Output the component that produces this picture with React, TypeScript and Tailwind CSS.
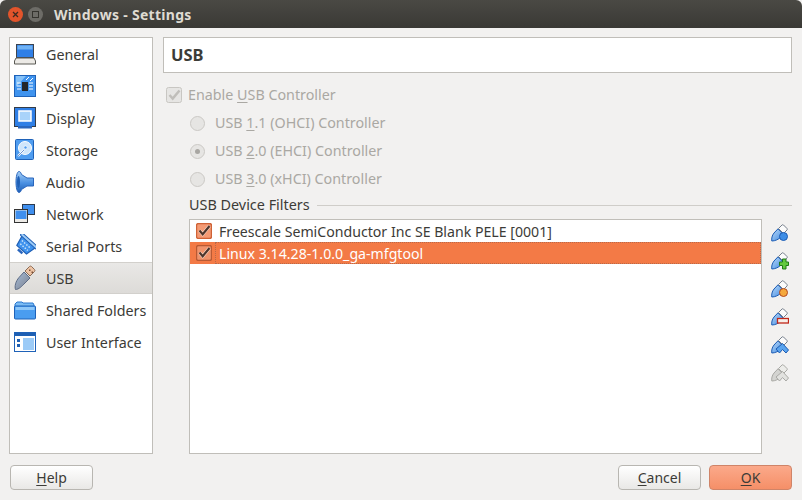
import type { ReactNode } from "react";

const font = { fontFamily: '"Noto Sans", sans-serif' };

function Laptop() {
  return (
    <svg width="22" height="22" viewBox="0 0 22 22">
      <rect x="2.500" y="1.500" width="17" height="13" fill="#2f7fe6" stroke="#3c4450" />
      <rect x="3.500" y="2.500" width="15" height="4" fill="#6fb2f5" />
      <path d="M2 15h18l1.500 3v3H.5v-3z" fill="#eceae6" stroke="#5a5a55" />
    </svg>
  );
}

function Chip() {
  return (
    <svg width="22" height="22" viewBox="0 0 22 22">
      <rect x=".5" y=".5" width="21" height="21" fill="#3f93ee" stroke="#1f62b8" />
      <path d="M2 1h10L2 12z" fill="#86c2f8" />
      <rect x="8" y="7" width="6" height="9" fill="#23262b" />
      <path d="M3 8h4M3 11h4M3 14h4M15 8h4M15 11h4M15 14h4M12 5l3-3M16 6l3-3" stroke="#fff" strokeWidth="1" />
    </svg>
  );
}

function Monitor() {
  return (
    <svg width="22" height="22" viewBox="0 0 22 22">
      <rect x=".5" y=".5" width="21" height="19" fill="#2f7fe6" stroke="#333b47" />
      <rect x="5" y="4" width="12" height="10" fill="#a9d3fa" stroke="#fff" strokeWidth="1.500" />
      <rect x="4" y="19" width="14" height="2.500" fill="#2a66bd" />
    </svg>
  );
}

function Disk() {
  return (
    <svg width="20" height="22" viewBox="0 0 20 22">
      <rect x=".5" y=".5" width="18" height="20" rx="1" fill="#4f9df0" stroke="#1f62b8" />
      <circle cx="10" cy="9" r="6.500" fill="#cfe6fb" stroke="#fff" />
      <circle cx="10.500" cy="8.500" r="1.600" fill="#4f9df0" stroke="#fff" strokeWidth=".6" />
      <path d="M3 17l6-6" stroke="#fff" strokeWidth="2" />
      <path d="M3 17l6-6" stroke="#2a66bd" strokeWidth=".7" />
    </svg>
  );
}

function Speaker() {
  return (
    <svg width="20" height="22" viewBox="0 0 20 22">
      <defs>
        <linearGradient id="spk" x1="0" y1="0" x2="0" y2="1">
          <stop offset="0" stopColor="#a8d0f6" />
          <stop offset=".55" stopColor="#4a90e2" />
          <stop offset="1" stopColor="#1f5fb5" />
        </linearGradient>
      </defs>
      <path d="M4 .5c1 0 2 1 2.500 3L12 7h6.500v8H12l-5.500 3.500C6 20.500 5 21.500 4 21.500 2 21.500 1 16 1 11S2 .5 4 .5z" fill="url(#spk)" stroke="#2a66bd" />
      <ellipse cx="3.500" cy="11" rx="1.500" ry="6" fill="#1f5fb5" />
    </svg>
  );
}

function NetworkIcon() {
  return (
    <svg width="22" height="20" viewBox="0 0 22 20">
      <rect x="8.500" y=".5" width="12" height="10" fill="#3f8fee" stroke="#2c3a4e" />
      <rect x=".5" y="5.500" width="13" height="13" fill="#eceae6" stroke="#333" />
      <rect x="1.500" y="6.500" width="11" height="8.500" fill="#3f8fee" />
    </svg>
  );
}

function SerialPort() {
  return (
    <svg width="22" height="24" viewBox="0 0 22 24">
      <g transform="rotate(42 11 12)">
        <path d="M2 6h18l-2.500 11H4.500z" fill="#3f93ee" stroke="#1f5fb5" strokeWidth="1.200" />
        <rect x="0" y="4" width="22" height="3" rx="1" fill="#9ccbf7" stroke="#1f5fb5" />
        <path d="M5 10h12M6 13.500h10" stroke="#cfe6fb" strokeWidth="1.500" strokeDasharray="1.500 1.500" />
        <rect x="8" y="18" width="6" height="2.500" fill="#2a66bd" />
      </g>
    </svg>
  );
}

function UsbPlug() {
  return (
    <svg width="24" height="26" viewBox="0 0 24 26">
      <defs>
        <linearGradient id="plug" x1="0" y1="0" x2="1" y2="1">
          <stop offset="0" stopColor="#a7bdd9" />
          <stop offset="1" stopColor="#7a7f8c" />
        </linearGradient>
      </defs>
      <path d="M2.500 24.500c-1-3 0-8 3.500-12L11 7l6 6-5 5c-3 3-6 6.500-9.500 6.500z" fill="url(#plug)" stroke="#5d6b85" />
      <path d="M12 6l4.500-4.500c.6-.6 1.200-.6 2 0l3 3c.6.8.6 1.400 0 2L17 11z" fill="#edc3a4" stroke="#8a6b55" />
      <rect x="16" y="4.500" width="1.500" height="1.500" fill="#7a4f35" />
      <rect x="18.500" y="6.500" width="1.500" height="1.500" fill="#7a4f35" />
    </svg>
  );
}

function Folder() {
  return (
    <svg width="22" height="20" viewBox="0 0 22 20">
      <path d="M1 18.500V4l2-2h5l1 1h10l1 2v2H1" fill="#7bbcf4" stroke="#2a78d0" />
      <rect x=".5" y="6" width="21" height="13" rx="1" fill="#4a9df0" stroke="#1f62b8" />
      <rect x="1.500" y="7" width="19" height="3" fill="#8ec7f8" />
    </svg>
  );
}

function WindowIcon() {
  return (
    <svg width="22" height="20" viewBox="0 0 22 20">
      <rect x=".5" y=".5" width="21" height="19" fill="#fff" stroke="#1f62b8" />
      <rect x="1" y="1" width="20" height="3" fill="#1d5fb3" />
      <rect x="9" y="6" width="11" height="12" fill="#9ccbf7" />
      <rect x="3" y="7" width="3" height="3" fill="#1d5fb3" />
      <rect x="3" y="12" width="3" height="3" fill="#1d5fb3" />
    </svg>
  );
}

// the small usb plug with a badge, used by the filter toolbar
function FilterTool({ badge, off }: { badge?: ReactNode; off?: boolean }) {
  const line = off ? "#a9a9a5" : "#1c5cb4";
  return (
    <svg width="18" height="18" viewBox="0 0 18 18">
      <defs>
        <linearGradient id="toolBody" x1="0" y1="0" x2="1" y2="1">
          <stop offset="0" stopColor="#bcdcf9" />
          <stop offset="1" stopColor="#3c86e0" />
        </linearGradient>
      </defs>
      <path d="M.8 17c-.4-2.500.2-5.500 2.200-8l4-4.200 5.500 5.500-2.500 2.700c-2.300 2.300-5.700 4-9.200 4z" fill={off ? "#d4d4d1" : "url(#toolBody)"} stroke={line} />
      <path d="M7.500 4.500L11 1c.5-.4 1-.4 1.500 0L16 4.500c.4.500.4 1 0 1.500l-3.500 3.500z" fill={off ? "#ecece9" : "#fbfbfb"} stroke={off ? "#a9a9a5" : "#77808c"} />
      {badge}
    </svg>
  );
}

const menu = [
  { label: "General", icon: <Laptop /> },
  { label: "System", icon: <Chip /> },
  { label: "Display", icon: <Monitor /> },
  { label: "Storage", icon: <Disk /> },
  { label: "Audio", icon: <Speaker /> },
  { label: "Network", icon: <NetworkIcon /> },
  { label: "Serial Ports", icon: <SerialPort /> },
  { label: "USB", icon: <UsbPlug />, active: true },
  { label: "Shared Folders", icon: <Folder /> },
  { label: "User Interface", icon: <WindowIcon /> },
];

const tools = [
  <FilterTool key="a" badge={<circle cx="12.500" cy="12.500" r="4" fill="#3d8de6" stroke="#1c5cb4" />} />,
  <FilterTool key="b" badge={<path d="M8.500 10h3V7h3.500v3h2.500v3.500H15V17h-3.500v-3.500h-3z" fill="#62c93f" stroke="#1f7a1a" />} />,
  <FilterTool key="c" badge={<circle cx="12.500" cy="12.500" r="4" fill="#f5a83c" stroke="#b5481f" />} />,
  <FilterTool key="d" badge={<rect x="6.500" y="10.500" width="11" height="4.500" fill="#f6efe9" stroke="#c0271a" strokeWidth="1.300" />} />,
  <FilterTool key="e" badge={<path d="M5 13l6.500-5.500L17.500 14l-2.500 3-3.500-3.500L8.500 17z" fill="#5aa4ee" stroke="#1c5cb4" />} />,
  <FilterTool key="f" off badge={<path d="M5 13l6.500-5.500L17.500 14l-2.500 3-3.500-3.500L8.500 17z" fill="#e2e2df" stroke="#a9a9a5" />} />,
];

function RadioRow({ before, hot, after, on }: { before: string; hot: string; after: string; on?: boolean }) {
  return (
    <div className="flex h-7 items-center gap-[10px] text-[14.300px] text-[#aaa8a3]">
      <span className="flex h-[15px] w-[15px] items-center justify-center rounded-full border border-[#cbc9c5] bg-[#e6e5e3]">
        {on && <span className="h-[5px] w-[5px] rounded-full bg-[#a8a6a2]" />}
      </span>
      <span>
        {before}
        <span className="underline underline-offset-2">{hot}</span>
        {after}
      </span>
    </div>
  );
}

function GreyCheck() {
  return (
    <svg width="16" height="16" viewBox="0 0 16 16">
      <rect x=".5" y=".5" width="15" height="15" rx="2" fill="#e6e5e3" stroke="#c8c6c2" />
      <path d="M3.500 8l3.200 3.500L13.500 3.500" fill="none" stroke="#c0beba" strokeWidth="2.500" />
    </svg>
  );
}

function OrangeCheck({ edge, fill }: { edge: string; fill: string }) {
  return (
    <svg width="16" height="16" viewBox="0 0 16 16">
      <rect x=".5" y=".5" width="15" height="15" rx="2" fill={fill} stroke={edge} strokeWidth="1.400" />
      <path d="M3.500 7.500l3.200 3.700L13.500 3" fill="none" stroke="#f8dccd" strokeWidth="3.400" />
      <path d="M3.500 7.500l3.200 3.700L13.500 3" fill="none" stroke="#4f352b" strokeWidth="2.200" />
    </svg>
  );
}

function Button({ children, primary }: { children: ReactNode; primary?: boolean }) {
  return (
    <button
      className={`flex h-[25px] w-[83px] items-center justify-center rounded-[4px] border text-[14px] text-[#3c3b37] ${
        primary
          ? "border-[#cf8468] bg-gradient-to-b from-[#fba98a] to-[#f58f68]"
          : "border-[#b8b6b1] bg-gradient-to-b from-[#ffffff] to-[#e9e8e6]"
      }`}
    >
      {children}
    </button>
  );
}

export default function App() {
  return (
    <div style={font} className="flex h-[500px] w-[802px] flex-col overflow-hidden bg-[#f2f1f0]">
      <div className="flex h-7 shrink-0 items-center rounded-t-[6px] bg-gradient-to-b from-[#4a4944] to-[#3a3935] pl-2">
        <span className="flex h-[15px] w-[15px] items-center justify-center rounded-full bg-[#e2542b]">
          <svg width="7" height="7" viewBox="0 0 7 7">
            <path d="M1 1l5 5M6 1L1 6" stroke="#3c2a20" strokeWidth="1.300" />
          </svg>
        </span>
        <span className="ml-[5px] flex h-[15px] w-[15px] items-center justify-center rounded-full bg-[#6d6c67]">
          <span className="h-[7px] w-[7px] border border-[#35342f]" />
        </span>
        <span className="ml-[11px] text-[14px] font-bold tracking-[0.3px] text-[#dfdbd2]">Windows - Settings</span>
      </div>

      <div className="flex min-h-0 flex-1 gap-[10px] pt-[9px] pr-[10px] pl-[9px]">
        <div className="flex h-[417px] w-[144px] shrink-0 flex-col border border-[#c0beb9] bg-white">
          {menu.map((m) => (
            <div
              key={m.label}
              className={`flex h-8 shrink-0 items-center text-[14.300px] text-[#3c3b37] ${
                m.active ? "border-y border-[#d2d0cc] bg-gradient-to-b from-[#e9e8e6] to-[#dddbd8]" : ""
              }`}
            >
              <span className="flex w-[36px] shrink-0 justify-center pr-[6px]">{m.icon}</span>
              <span className="pt-[2px]">{m.label}</span>
            </div>
          ))}
        </div>

        <div className="flex min-w-0 flex-1 flex-col">
          <div className="flex h-[36px] items-center border border-[#c0beb9] bg-white pl-[7px] text-[16.500px] font-bold text-[#3c3b37]">
            USB
          </div>

          <div className="mt-2 flex h-7 items-center gap-[6px] pl-[3px] text-[14.300px] text-[#aaa8a3]">
            <span className="flex h-4 w-4 items-center justify-center">
              <GreyCheck />
            </span>
            <span>
              Enable <span className="underline underline-offset-2">U</span>SB Controller
            </span>
          </div>

          <div className="pl-[27px]">
            <RadioRow before="USB " hot="1" after=".1 (OHCI) Controller" />
            <RadioRow before="USB " hot="2" after=".0 (EHCI) Controller" on />
            <RadioRow before="USB " hot="3" after=".0 (xHCI) Controller" />
          </div>

          <div className="flex min-h-0 flex-1 flex-col pl-[26px]">
            <div className="mb-[2px] flex h-6 items-center gap-[7px] text-[14.400px] text-[#3c3b37]">
              <span>USB Device Filters</span>
              <span className="h-px flex-1 bg-[#cfcdc9]" />
            </div>
            <div className="flex min-h-0 gap-[9px]">
              <div className="h-[235px] w-[573px] shrink-0 border border-[#c0beb9] bg-white text-[14.150px] text-[#3c3b37]">
                <div className="flex h-[22px] items-center gap-[7px] pl-[6px]">
                  <OrangeCheck edge="#cf6236" fill="#f49a74" />
                  <span className="pt-[2px]">Freescale SemiConductor Inc SE Blank PELE [0001]</span>
                </div>
                <div className="flex h-[22px] items-center bg-[#f37a46] pl-[6px] text-white">
                  <OrangeCheck edge="#b85a34" fill="#f0936c" />
                  <span className="ml-[3px] flex h-full flex-1 items-center border border-dotted border-[#b8694a] pt-[2px] pl-[3px]">
                    Linux 3.14.28-1.0.0_ga-mfgtool
                  </span>
                </div>
              </div>
              <div className="flex flex-col items-center gap-[10px] pt-[5px]">
                {tools.map((t, i) => (
                  <span key={i} className="flex h-[18px] w-[18px] items-center justify-center">
                    {t}
                  </span>
                ))}
              </div>
            </div>
          </div>
        </div>
      </div>

      <div className="flex h-[46px] shrink-0 items-start justify-between px-[10px] pt-[11px]">
        <Button>
          <span className="underline underline-offset-2">H</span>elp
        </Button>
        <div className="flex gap-2">
          <Button>
            <span className="underline underline-offset-2">C</span>ancel
          </Button>
          <Button primary>
            <span className="underline underline-offset-2">O</span>K
          </Button>
        </div>
      </div>
    </div>
  );
}
